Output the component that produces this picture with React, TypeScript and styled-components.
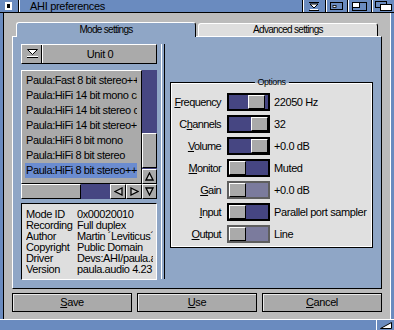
import React from "react";
import styled, { createGlobalStyle } from "styled-components";

const C = {
  frame: "#6a8bbf",
  gray: "#bbbbbb",
  btn: "#aaaaaa",
  panel: "#8fa6c6",
  dark: "#464682",
  sel: "#6b8cd0",
  light: "#dedede",
  box: "#e0e0e0",
  disFill: "#7b7b9d",
  disBorder: "#5e5e5e",
};

const Global = createGlobalStyle`
  html, body { margin: 0; padding: 0; background: ${C.frame}; }
  body {
    width: 394px; height: 330px; overflow: hidden;
    font-family: "Liberation Sans", Arial, sans-serif;
    font-size: 11px; letter-spacing: -0.4px; color: #000;
  }
  * { box-sizing: border-box; }
`;

const Window = styled.div`
  width: 394px;
  height: 330px;
  display: flex;
  flex-direction: column;
  background: ${C.frame};
`;

/* ---------- title bar ---------- */
const TitleBar = styled.div`
  height: 13px;
  display: flex;
  border-bottom: 1px solid #000;
  background: ${C.frame};
`;
const CloseGadget = styled.div`
  width: 19px;
  border-right: 1px solid #000;
  display: flex;
  align-items: center;
  justify-content: center;
  padding-right: 2px;
`;
const Title = styled.div`
  flex: 1;
  border-left: 1px solid #fff;
  padding-left: 10px;
  line-height: 12px;
  font-size: 11px;
  letter-spacing: -0.3px;
`;
const Gadget = styled.div<{ $w: number }>`
  width: ${(p) => p.$w}px;
  border-left: 1px solid #000;
  box-shadow: inset 1px 0 0 #fff;
  display: flex;
  align-items: center;
  justify-content: center;
`;

/* ---------- frame ---------- */
const Body = styled.div`
  flex: 1;
  display: flex;
`;
const LeftBorder = styled.div`
  width: 4px;
  background: ${C.frame};
  border-right: 1px solid #000;
`;
const RightBorder = styled.div`
  width: 4px;
  background: ${C.frame};
  border-left: 1px solid #fff;
`;
const Inner = styled.div`
  flex: 1;
  background: ${C.gray};
  display: flex;
  flex-direction: column;
  padding: 9px 8px 0 8px;
`;
const BottomBorder = styled.div`
  height: 11px;
  border-top: 1px solid #fff;
  background: ${C.frame};
  display: flex;
  justify-content: flex-end;
`;
const SizeGadget = styled.div`
  width: 18px;
  border-left: 1px solid #fff;
  display: flex;
  align-items: center;
  justify-content: center;
`;

/* ---------- tabs ---------- */
const TabRow = styled.div`
  height: 14px;
  display: flex;
  align-items: flex-end;
  gap: 2px;
  padding-left: 4px;
  position: relative;
  z-index: 1;
`;
const Tab = styled.div<{ $active?: boolean }>`
  width: 180px;
  height: ${(p) => (p.$active ? 15 : 13)}px;
  margin-bottom: ${(p) => (p.$active ? -1 : 0)}px;
  background: ${(p) => (p.$active ? C.panel : C.light)};
  border-top: 1px solid #fff;
  border-left: 1px solid #fff;
  border-right: 1px solid #000;
  border-radius: 3px 3px 0 0;
  font-size: 10px;
  letter-spacing: -0.7px;
  text-align: center;
  line-height: 11px;
  padding-top: ${(p) => (p.$active ? 1 : 0)}px;
`;

/* ---------- panel ---------- */
const Panel = styled.div`
  height: 253px;
  background: ${C.panel};
  border-top: 1px solid #fff;
  border-left: 1px solid #fff;
  border-right: 1px solid #000;
  border-bottom: 1px solid #000;
  display: flex;
  align-items: flex-start;
  padding: 7px 7px 0 8px;
`;
const LeftCol = styled.div`
  width: 136px;
  display: flex;
  flex-direction: column;
`;
const Separator = styled.div`
  width: 4px;
  height: 235px;
  margin-left: 4px;
  border-left: 1px solid #fff;
  border-right: 1px solid #000;
`;
const RightCol = styled.div`
  width: 203px;
  margin-left: 5px;
  padding-top: 38px;
`;

const Bevel = `
  background: ${C.btn};
  border-top: 1px solid #fff;
  border-left: 1px solid #fff;
  border-right: 1px solid #000;
  border-bottom: 1px solid #000;
`;

const UnitButton = styled.div`
  ${Bevel}
  height: 20px;
  display: flex;
  align-items: stretch;
`;
const PopPart = styled.div`
  width: 20px;
  border-right: 1px solid #000;
  box-shadow: 1px 0 0 #fff;
  display: flex;
  align-items: center;
  justify-content: center;
  padding-left: 1px;
`;
const UnitLabel = styled.div`
  flex: 1;
  text-align: center;
  line-height: 18px;
  font-size: 11px;
  padding-left: 2px;
`;

/* ---------- list ---------- */
const ListGrid = styled.div`
  margin-top: 6px;
  display: grid;
  grid-template-columns: 121px 15px;
  grid-template-rows: 114px 15px;
`;
const ListBox = styled.div`
  ${Bevel}
  padding: 2px 3px 0 3px;
  overflow: hidden;
`;
const ListItem = styled.div<{ $sel?: boolean }>`
  height: 15px;
  line-height: 15px;
  padding-left: 1px;
  width: 112px;
  white-space: nowrap;
  overflow: hidden;
  background: ${(p) => (p.$sel ? C.sel : "transparent")};
`;
const VScroll = styled.div`
  display: flex;
  flex-direction: column;
`;
const VTrack = styled.div`
  flex: 1;
  background: ${C.dark};
  display: flex;
  flex-direction: column;
`;
const VKnob = styled.div`
  ${Bevel}
  height: 35px;
  width: 100%;
`;
const HScroll = styled.div`
  display: flex;
`;
const HTrack = styled.div`
  flex: 1;
  background: ${C.dark};
  display: flex;
`;
const HKnob = styled.div`
  ${Bevel}
  width: 60px;
  height: 100%;
`;
const ArrowBtn = styled.div<{ $w?: number }>`
  ${Bevel}
  width: ${(p) => p.$w ?? 15}px;
  height: 15px;
  display: flex;
  align-items: center;
  justify-content: center;
`;

/* ---------- info ---------- */
const InfoBox = styled.div`
  margin-top: 4px;
  height: 77px;
  background: ${C.light};
  border-top: 1px solid #000;
  border-left: 1px solid #000;
  border-right: 1px solid #fff;
  border-bottom: 1px solid #fff;
  padding: 5px 3px 0 4px;
  display: grid;
  grid-template-columns: 51px 1fr;
  grid-auto-rows: 11px;
  line-height: 11px;
  overflow: hidden;
`;
const InfoCell = styled.div`
  white-space: nowrap;
  overflow: hidden;
`;

/* ---------- options ---------- */
const OptionsBox = styled.div`
  position: relative;
  background: ${C.box};
  border: 1px solid #000;
  box-shadow: inset 0 0 0 1px #fff;
  padding: 10px 0 4px 0;
  display: flex;
  flex-direction: column;
  gap: 4px;
`;
const Legend = styled.div`
  position: absolute;
  top: -6px;
  left: 50%;
  transform: translateX(-50%);
  padding: 0 3px;
  font-size: 9px;
  letter-spacing: -0.4px;
  line-height: 10px;
  background: linear-gradient(to bottom, ${C.panel} 6px, ${C.box} 6px);
`;
const Row = styled.div`
  height: 18px;
  display: flex;
  align-items: center;
`;
const Label = styled.div`
  width: 50px;
  text-align: right;
  white-space: nowrap;
  letter-spacing: -0.6px;
  line-height: 13px;
  u { text-decoration: underline; text-underline-offset: 1px; }
`;
const Slider = styled.div<{ $disabled?: boolean }>`
  width: 43px;
  height: 18px;
  margin-left: 6px;
  border: 2px solid ${(p) => (p.$disabled ? C.disBorder : "#000")};
  background: ${(p) => (p.$disabled ? C.disFill : C.dark)};
  display: flex;
`;
const Knob = styled.div`
  ${Bevel}
  width: 17px;
  height: 100%;
`;
const Value = styled.div`
  margin-left: 4px;
  white-space: nowrap;
`;

/* ---------- buttons ---------- */
const ButtonRow = styled.div`
  margin-top: 4px;
  height: 19px;
  display: flex;
  gap: 5px;
`;
const Button = styled.div`
  flex: 1;
  background: ${C.btn};
  border: 1px solid #000;
  box-shadow: inset 1px 1px 0 #e8e8e8;
  text-align: center;
  line-height: 17px;
  font-size: 11px;
  u { text-underline-offset: 1px; }
`;

/* ---------- icons ---------- */
const Tri = ({ dir }: { dir: "up" | "down" | "left" | "right" }) => {
  const pts = {
    up: "4.5,1 8,8 1,8",
    down: "1,1 8,1 4.5,8",
    left: "1,4.5 8,1 8,8",
    right: "1,1 8,4.5 1,8",
  }[dir];
  return (
    <svg width="9" height="9" viewBox="0 0 9 9">
      <polygon points={pts} fill="#c8c8c8" stroke="#000" strokeWidth="1.3" />
    </svg>
  );
};

const PopIcon = () => (
  <svg width="11" height="10" viewBox="0 0 11 10">
    <polygon points="0.5,0.5 10.5,0.5 5.5,5.5" fill="#fff" stroke="#000" />
    <line x1="0" y1="7.5" x2="11" y2="7.5" stroke="#fff" />
    <line x1="0" y1="8.5" x2="11" y2="8.5" stroke="#000" />
  </svg>
);

type Opt = { label: string; u: number; value: string; pos: number; disabled?: boolean };
const options: Opt[] = [
  { label: "Frequency", u: 0, value: "22050 Hz", pos: 19 / 22 },
  { label: "Channels", u: 1, value: "32", pos: 1 },
  { label: "Volume", u: 0, value: "+0.0 dB", pos: 1 },
  { label: "Monitor", u: 0, value: "Muted", pos: 0 },
  { label: "Gain", u: 0, value: "+0.0 dB", pos: 0, disabled: true },
  { label: "Input", u: 0, value: "Parallel port sampler", pos: 0 },
  { label: "Output", u: 0, value: "Line", pos: 0, disabled: true },
];

const modes = [
  "Paula:Fast 8 bit stereo++",
  "Paula:HiFi 14 bit mono calibrated",
  "Paula:HiFi 14 bit stereo calibrated",
  "Paula:HiFi 14 bit stereo++",
  "Paula:HiFi 8 bit mono",
  "Paula:HiFi 8 bit stereo",
  "Paula:HiFi 8 bit stereo++",
];

const info: [string, string][] = [
  ["Mode ID", "0x00020010"],
  ["Recording", "Full duplex"],
  ["Author", "Martin \u00b4Leviticus\u00b4 Blom"],
  ["Copyright", "Public Domain"],
  ["Driver", "Devs:AHI/paula.audio"],
  ["Version", "paula.audio 4.23"],
];

const Underlined = ({ text, u }: { text: string; u: number }) => (
  <>
    {text.slice(0, u)}
    <u>{text[u]}</u>
    {text.slice(u + 1)}
  </>
);

const KNOB_RANGE = 22;

export default function App() {
  return (
    <>
      <Global />
      <Window>
        <TitleBar>
          <CloseGadget>
            <svg width="7" height="8" viewBox="0 0 7 8">
              <rect x="0.5" y="0.5" width="6" height="7" fill="#fff" stroke="#fff" />
              <rect x="2" y="2" width="3" height="4" fill="#000" />
            </svg>
          </CloseGadget>
          <Title>AHI preferences</Title>
          <Gadget $w={23}>
            <svg width="10" height="9" viewBox="0 0 10 9">
              <line x1="0" y1="0.5" x2="10" y2="0.5" stroke="#000" />
              <polygon points="1,2 9,2 5,6" fill="#fff" stroke="#000" />
              <line x1="1" y1="7.5" x2="9" y2="7.5" stroke="#fff" />
              <line x1="0" y1="8.5" x2="10" y2="8.5" stroke="#000" />
            </svg>
          </Gadget>
          <Gadget $w={22}>
            <svg width="13" height="8" viewBox="0 0 13 8">
              <rect x="0.5" y="0.5" width="12" height="7" fill={C.frame} stroke="#000" />
              <rect x="3" y="3.5" width="3" height="2" fill="#fff" stroke="#000" strokeWidth="0.8" />
            </svg>
          </Gadget>
          <Gadget $w={24}>
            <svg width="15" height="9" viewBox="0 0 15 9">
              <rect x="0.5" y="0.5" width="14" height="8" fill={C.frame} stroke="#000" />
              <rect x="0.5" y="0.5" width="7" height="5" fill="#fff" stroke="#000" />
            </svg>
          </Gadget>
          <Gadget $w={23}>
            <svg width="17" height="10" viewBox="0 0 17 10">
              <rect x="0.5" y="0.5" width="11" height="6" fill={C.frame} stroke="#000" />
              <rect x="5.5" y="3.5" width="11" height="6" fill="#fff" stroke="#000" />
            </svg>
          </Gadget>
        </TitleBar>

        <Body>
          <LeftBorder />
          <Inner>
            <TabRow>
              <Tab $active>Mode settings</Tab>
              <Tab>Advanced settings</Tab>
            </TabRow>
            <Panel>
              <LeftCol>
                <UnitButton>
                  <PopPart>
                    <PopIcon />
                  </PopPart>
                  <UnitLabel>Unit 0</UnitLabel>
                </UnitButton>

                <ListGrid>
                  <ListBox>
                    {modes.map((m, i) => (
                      <ListItem key={m} $sel={i === modes.length - 1}>
                        {m}
                      </ListItem>
                    ))}
                  </ListBox>
                  <VScroll>
                    <VTrack>
                      <VKnob style={{ marginTop: 63 }} />
                    </VTrack>
                    <ArrowBtn>
                      <Tri dir="up" />
                    </ArrowBtn>
                  </VScroll>
                  <HScroll>
                    <HTrack>
                      <HKnob />
                    </HTrack>
                    <ArrowBtn $w={16}>
                      <Tri dir="left" />
                    </ArrowBtn>
                    <ArrowBtn $w={16}>
                      <Tri dir="right" />
                    </ArrowBtn>
                  </HScroll>
                  <ArrowBtn>
                    <Tri dir="down" />
                  </ArrowBtn>
                </ListGrid>

                <InfoBox>
                  {info.map(([k, v]) => (
                    <React.Fragment key={k}>
                      <InfoCell>{k}</InfoCell>
                      <InfoCell>{v}</InfoCell>
                    </React.Fragment>
                  ))}
                </InfoBox>
              </LeftCol>

              <Separator />

              <RightCol>
                <OptionsBox>
                  <Legend>Options</Legend>
                  {options.map((o) => (
                    <Row key={o.label}>
                      <Label>
                        <Underlined text={o.label} u={o.u} />
                      </Label>
                      <Slider $disabled={o.disabled}>
                        <Knob style={{ marginLeft: Math.round(o.pos * KNOB_RANGE) }} />
                      </Slider>
                      <Value>{o.value}</Value>
                    </Row>
                  ))}
                </OptionsBox>
              </RightCol>
            </Panel>

            <ButtonRow>
              <Button>
                <u>S</u>ave
              </Button>
              <Button>
                <u>U</u>se
              </Button>
              <Button>
                <u>C</u>ancel
              </Button>
            </ButtonRow>
          </Inner>
          <RightBorder />
        </Body>

        <BottomBorder>
          <SizeGadget>
            <svg width="12" height="7" viewBox="0 0 12 7">
              <polygon points="0.5,6.5 11.5,6.5 11.5,0.5" fill="#fff" stroke="#000" />
            </svg>
          </SizeGadget>
        </BottomBorder>
      </Window>
    </>
  );
}
